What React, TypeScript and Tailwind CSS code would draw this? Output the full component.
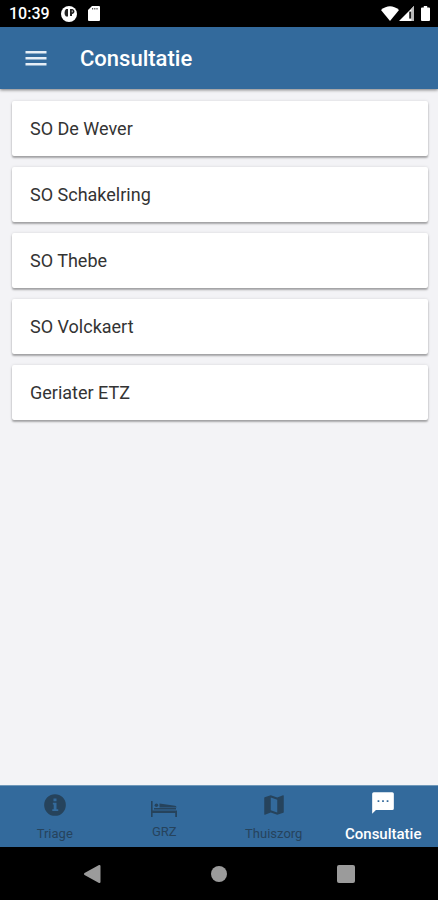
const contacts = ['SO De Wever', 'SO Schakelring', 'SO Thebe', 'SO Volckaert', 'Geriater ETZ'];

const StatusBar = () => {
    return (
        <div className="flex h-[27px] items-center justify-between bg-black pr-2 pl-[9px] text-white">
            <div className="flex items-center">
                <span className="text-base font-medium">10:39</span>
                <svg className="ml-[11px] h-4 w-4" viewBox="0 0 16 16">
                    <circle cx="8" cy="8" r="8" fill="#fff" />
                    <path d="M5 3h2v7.500H5q-1.500-1-1.500-3.500T5 3z" fill="#222" />
                    <path d="M9 3h2.500q2 .6 2 2.500t-2 2.500H11v2H9z" fill="#222" />
                    <path d="M10.800 4.600h.8v1.600h-.8z" fill="#fff" />
                </svg>
                <svg className="ml-[11px] h-[15px] w-3" viewBox="0 0 12 15">
                    <path d="M4 0h7q1 0 1 1v13q0 1-1 1H1q-1 0-1-1V4z" fill="#fff" />
                    <path d="M4 2h1.200v1.600H4zM6.200 2h1.200v1.600H6.200zM8.400 2h1.200v1.600H8.400z" fill="#555" />
                </svg>
            </div>
            <div className="flex items-center">
                <svg className="h-[15px] w-[18px]" viewBox="0 0 18 15">
                    <path d="M0 4Q9-3.500 18 4L9 15z" fill="#fff" />
                </svg>
                <svg className="h-[15px] w-[15px]" viewBox="0 0 15 15">
                    <path d="M15 0v15H0z" fill="#fff" />
                    <path d="M10.200 5.600h2.200v7h-2.200z" fill="#222" />
                    <path d="M12.400 2.600 15 0v15h-2.600z" fill="#bbb" />
                </svg>
                <svg className="ml-[7px] h-[15px] w-[9px]" viewBox="0 0 9 15">
                    <path d="M2.800 0h3.400v1.500H8q1 0 1 1V14q0 1-1 1H1q-1 0-1-1V2.500q0-1 1-1h1.800z" fill="#fff" />
                </svg>
            </div>
        </div>
    )
}

const Header = () => {
    return (
        <header className="z-10 flex h-[62px] items-center bg-[#336a9c] px-6 text-white shadow-[0_1px_3px_rgba(0,0,0,0.5)]">
            <button aria-label="Menu" className="h-6 w-6">
                <svg className="h-6 w-6" viewBox="0 0 24 24" fill="#e6eef6">
                    <path d="M1.500 5h21v2.600h-21zM1.500 11h21v2.600h-21zM1.500 17h21v2.600h-21z" />
                </svg>
            </button>
            <h1 className="ml-8 text-[22px] font-medium">Consultatie</h1>
        </header>
    )
}

const InfoIcon = () => (
    <svg className="h-[26px] w-[26px]" viewBox="0 0 24 24" fill="currentColor">
        <path d="M12 2a10 10 0 1 0 0 20 10 10 0 0 0 0-20zm1.400 4v2.500h-2.800V6zm-3.400 4h3.400v6H15v1.500H9.500V16h1.300v-4.500H10z" />
    </svg>
)

const BedIcon = () => (
    <svg className="h-[17px] w-[26px]" viewBox="0 0 26 17" fill="currentColor">
        <path d="M0 1h1.600v9.600H26V17h-1.800v-4H1.600v4H0z" />
        <circle cx="5.400" cy="5.200" r="1.800" />
        <path d="M3 8h22v1.500H3zM8.500 3.600l15.500 2.100q1.500.3 1.500 1.800H8.500z" />
    </svg>
)

const MapIcon = () => (
    <svg className="h-[26px] w-[26px]" viewBox="0 0 24 24" fill="currentColor">
        <path d="M20.500 3l-.16.03L15 5.100 9 3 3.360 4.900c-.21.07-.36.25-.36.48V20.500c0 .28.220.5.500.5l.16-.03L9 18.900l6 2.100 5.640-1.900c.21-.07.360-.25.360-.48V3.500c0-.28-.22-.5-.5-.5zM15 19l-6-2.110V5l6 2.110V19z" />
    </svg>
)

const ChatIcon = () => (
    <svg className="h-[26px] w-[26px]" viewBox="0 0 24 24">
        <path d="M20.500 2h-17Q2 2 2 3.500V22l3.500-3.500h15q1.500 0 1.500-1.500V3.500Q22 2 20.500 2z" fill="currentColor" />
        <path d="M7 9.500h1.600v1.600H7zM11.200 9.500h1.600v1.600h-1.600zM15.400 9.500H17v1.600h-1.600z" fill="#336a9c" />
    </svg>
)

const TabBar = () => {
    return (
        <nav className="grid h-[62px] grid-cols-4 border-t border-[#6f98b9] bg-[#336a9c] text-[#26435c]">
            <button className="flex flex-col items-center pt-[6px]">
                <InfoIcon />
                <span className="mt-2 text-[13px] leading-4">Triage</span>
            </button>
            <button className="flex flex-col items-center pt-[14px]">
                <BedIcon />
                <span className="mt-[7px] text-[13px] leading-4">GRZ</span>
            </button>
            <button className="flex flex-col items-center pt-[6px]">
                <MapIcon />
                <span className="mt-2 text-[13px] leading-4">Thuiszorg</span>
            </button>
            <button aria-current="page" className="flex flex-col items-center pt-1 text-white">
                <ChatIcon />
                <span className="mt-2 text-[15px] leading-5 font-medium">Consultatie</span>
            </button>
        </nav>
    )
}

const SystemNav = () => {
    return (
        <div className="flex h-[53px] bg-black px-7">
            <button aria-label="Back" className="flex flex-1 items-center justify-center">
                <svg className="h-5 w-[18px]" viewBox="0 0 18 20">
                    <path d="M16.500 2v16L2 10z" fill="#9b9b9b" stroke="#9b9b9b" strokeWidth="2" strokeLinejoin="round" />
                </svg>
            </button>
            <button aria-label="Home" className="flex flex-1 items-center justify-center">
                <span className="h-4 w-4 rounded-full bg-[#9b9b9b]" />
            </button>
            <button aria-label="Recent" className="flex flex-1 items-center justify-center">
                <span className="h-[18px] w-[18px] rounded-xs bg-[#9b9b9b]" />
            </button>
        </div>
    )
}

const App = () => {
    return (
        <div className="flex min-h-screen flex-col bg-[#f3f3f6] font-[Roboto,sans-serif]">
            <StatusBar />
            <Header />
            <main className="flex flex-1 flex-col gap-[11px] pt-3 pr-[10px] pl-3">
                {contacts.map((name) => (
                    <button key={name} className="h-[55px] rounded-xs bg-white px-[18px] text-left text-[18px] text-[#333] shadow-[0_2px_2px_rgba(0,0,0,0.3),0_0_3px_rgba(0,0,0,0.12)]">
                        {name}
                    </button>
                ))}
            </main>
            <TabBar />
            <SystemNav />
        </div>
    )
}

export default App
